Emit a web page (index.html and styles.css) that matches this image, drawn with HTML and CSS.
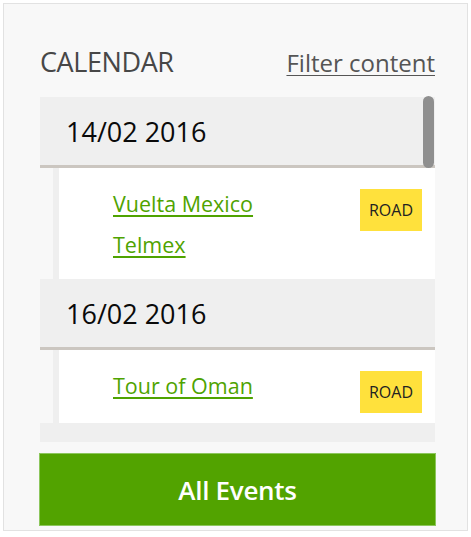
FILE: index.html
```html
<!DOCTYPE html>
<html lang="en">
<head>
<meta charset="utf-8">
<title>Calendar</title>
<link rel="stylesheet" href="styles.css">
</head>
<body>
<section class="panel">
  <header class="panel-head">
    <h2 class="panel-title">CALENDAR</h2>
    <a class="filter-link" href="#">Filter content</a>
  </header>
  <div class="list-wrap">
    <div class="list">
      <div class="date-head">14/02 2016</div>
      <div class="event">
        <div class="event-links">
          <a href="#">Vuelta Mexico</a><br>
          <a href="#">Telmex</a>
        </div>
        <span class="badge">ROAD</span>
      </div>
      <div class="date-head">16/02 2016</div>
      <div class="event">
        <div class="event-links">
          <a href="#">Tour of Oman</a>
        </div>
        <span class="badge">ROAD</span>
      </div>
      <div class="date-head" aria-hidden="true"></div>
    </div>
    <div class="scroll-thumb"></div>
  </div>
  <a class="all-events" href="#">All Events</a>
</section>
</body>
</html>
```
FILE: styles.css
```css
* { box-sizing: border-box; }
html, body { margin: 0; padding: 0; background: #ffffff; }
body {
  font-family: "Open Sans", "Noto Sans", sans-serif;
}
.panel {
  margin: 3px;
  width: 465px;
  height: 528px;
  border: 1px solid #e2e2e2;
  background: #f8f8f8;
  padding: 0 32px 0 36px;
}
.panel-head {
  display: flex;
  justify-content: space-between;
  align-items: baseline;
  margin: 44px 0 22px;
}
.panel-title {
  margin: 0;
  font-size: 27px;
  line-height: 27px;
  font-weight: 400;
  letter-spacing: -0.4px;
  color: #474747;
}
.filter-link {
  font-size: 24px;
  line-height: 24px;
  color: #555555;
  text-decoration: underline;
  text-underline-offset: 3px;
  text-decoration-thickness: 1px;
}
.list-wrap {
  position: relative;
}
.list {
  height: 345px;
  overflow: hidden;
}
.date-head {
  height: 71px;
  display: flex;
  align-items: center;
  padding-left: 26px;
  background: #efefef;
  border-bottom: 3px solid #cbc6c0;
  font-size: 27px;
  color: #0a0a0a;
}
.event {
  display: flex;
  justify-content: space-between;
  align-items: flex-start;
  margin-left: 13px;
  border-left: 6px solid #efefef;
  background: #ffffff;
}
.event-links {
  padding: 15px 0 14px 54px;
  font-size: 21.5px;
  line-height: 41px;
}
.event-links a {
  color: #4fa300;
  text-decoration: underline;
  text-underline-offset: 3px;
  text-decoration-thickness: 2px;
}
.badge {
  display: flex;
  align-items: center;
  justify-content: center;
  width: 62px;
  height: 42px;
  margin: 21px 13px 10px 0;
  background: #ffe13c;
  font-size: 16px;
  color: #222222;
}
.scroll-thumb {
  position: absolute;
  top: -1px;
  left: 383px;
  width: 11px;
  height: 72px;
  border-radius: 6px;
  background: #8f8f8f;
}
.all-events {
  display: flex;
  align-items: center;
  justify-content: center;
  margin: 11px 0 0 -1px;
  width: 397px;
  height: 73px;
  background: #52a300;
  border: 1px solid #8cc65c;
  color: #ffffff;
  font-size: 26px;
  font-weight: 600;
  letter-spacing: -0.3px;
  text-decoration: none;
}
```
